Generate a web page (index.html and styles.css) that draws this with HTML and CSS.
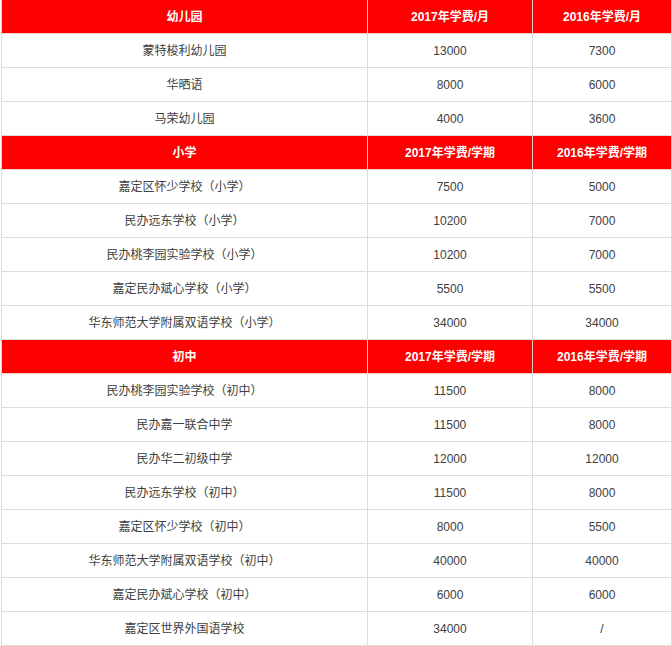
FILE: index.html
```html
<!DOCTYPE html>
<html lang="zh">
<head>
<meta charset="utf-8">
<title>嘉定学校学费</title>
<link rel="stylesheet" href="styles.css">
</head>
<body>
<table class="fees">
  <colgroup><col class="c1"><col class="c2"><col class="c3"></colgroup>
  <tr class="head"><td>幼儿园</td><td>2017年学费/月</td><td>2016年学费/月</td></tr>
  <tr><td>蒙特梭利幼儿园</td><td>13000</td><td>7300</td></tr>
  <tr><td>华晒语</td><td>8000</td><td>6000</td></tr>
  <tr><td>马荣幼儿园</td><td>4000</td><td>3600</td></tr>
  <tr class="head"><td>小学</td><td>2017年学费/学期</td><td>2016年学费/学期</td></tr>
  <tr><td>嘉定区怀少学校（小学）</td><td>7500</td><td>5000</td></tr>
  <tr><td>民办远东学校（小学）</td><td>10200</td><td>7000</td></tr>
  <tr><td>民办桃李园实验学校（小学）</td><td>10200</td><td>7000</td></tr>
  <tr><td>嘉定民办斌心学校（小学）</td><td>5500</td><td>5500</td></tr>
  <tr><td>华东师范大学附属双语学校（小学）</td><td>34000</td><td>34000</td></tr>
  <tr class="head"><td>初中</td><td>2017年学费/学期</td><td>2016年学费/学期</td></tr>
  <tr><td>民办桃李园实验学校（初中）</td><td>11500</td><td>8000</td></tr>
  <tr><td>民办嘉一联合中学</td><td>11500</td><td>8000</td></tr>
  <tr><td>民办华二初级中学</td><td>12000</td><td>12000</td></tr>
  <tr><td>民办远东学校（初中）</td><td>11500</td><td>8000</td></tr>
  <tr><td>嘉定区怀少学校（初中）</td><td>8000</td><td>5500</td></tr>
  <tr><td>华东师范大学附属双语学校（初中）</td><td>40000</td><td>40000</td></tr>
  <tr><td>嘉定民办斌心学校（初中）</td><td>6000</td><td>6000</td></tr>
  <tr><td>嘉定区世界外国语学校</td><td>34000</td><td>/</td></tr>
</table>
</body>
</html>
```
FILE: styles.css
```css
html, body {
  margin: 0;
  padding: 0;
  background: #fff;
}
.fees {
  border-collapse: collapse;
  table-layout: fixed;
  width: 670px;
  margin: -1px 0 0 1px;
  font-family: "Liberation Sans", "Noto Sans CJK SC", sans-serif;
  font-size: 12px;
  color: #404040;
}
.c1 { width: 366px; }
.c2 { width: 165px; }
.c3 { width: 139px; }
.fees td {
  border: 1px solid #dcdcdc;
  height: 33px;
  padding: 2px 0 0 0;
  text-align: center;
  vertical-align: middle;
  line-height: 31px;
  box-sizing: border-box;
}
.fees tr.head td {
  background: #fe0000;
  color: #fff;
  font-weight: bold;
  border-color: #f0c8c8;
}
```
